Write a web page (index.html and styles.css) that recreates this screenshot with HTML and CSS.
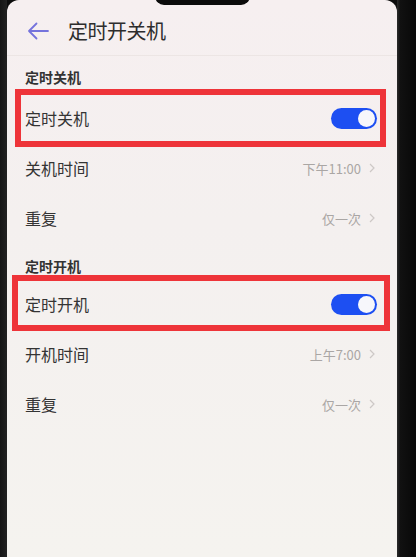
FILE: index.html
```html
<!DOCTYPE html>
<html lang="zh-CN">
<head>
<meta charset="utf-8">
<title>定时开关机</title>
<link rel="stylesheet" href="styles.css">
</head>
<body>
<div class="device">
  <div class="bezel-left"></div>
  <div class="screen">
    <div class="notch"></div>
    <header class="header">
      <svg class="back" width="22" height="18" viewBox="0 0 22 18">
        <path d="M21 9H2M9.5 1.5L2 9l7.5 7.5" fill="none" stroke="#7573dc" stroke-width="1.8" stroke-linecap="round" stroke-linejoin="round"/>
      </svg>
      <span class="title">定时开关机</span>
    </header>

    <div class="section first">定时关机</div>
    <div class="row boxed box-a">
      <span class="label">定时关机</span>
      <span class="switch"><span class="knob"></span></span>
    </div>
    <div class="row">
      <span class="label">关机时间</span>
      <span class="value">下午11:00<svg class="chev" width="6" height="10" viewBox="0 0 6 10"><path d="M1 1l4 4-4 4" fill="none" stroke="#cdc8c6" stroke-width="1.2"/></svg></span>
    </div>
    <div class="row">
      <span class="label">重复</span>
      <span class="value">仅一次<svg class="chev" width="6" height="10" viewBox="0 0 6 10"><path d="M1 1l4 4-4 4" fill="none" stroke="#cdc8c6" stroke-width="1.2"/></svg></span>
    </div>

    <div class="section second">定时开机</div>
    <div class="row boxed box-b">
      <span class="label">定时开机</span>
      <span class="switch"><span class="knob"></span></span>
    </div>
    <div class="row">
      <span class="label">开机时间</span>
      <span class="value">上午7:00<svg class="chev" width="6" height="10" viewBox="0 0 6 10"><path d="M1 1l4 4-4 4" fill="none" stroke="#cdc8c6" stroke-width="1.2"/></svg></span>
    </div>
    <div class="row">
      <span class="label">重复</span>
      <span class="value">仅一次<svg class="chev" width="6" height="10" viewBox="0 0 6 10"><path d="M1 1l4 4-4 4" fill="none" stroke="#cdc8c6" stroke-width="1.2"/></svg></span>
    </div>
  </div>
  <div class="bezel-right"></div>
</div>
</body>
</html>
```

FILE: styles.css
```css
* { box-sizing: border-box; }
html, body {
  margin: 0;
  padding: 0;
  background: #0c0c0c;
}
body {
  font-family: "Noto Sans CJK SC", "Noto Sans", sans-serif;
  color: #333;
}
.device {
  display: flex;
  width: 416px;
  height: 557px;
  overflow: hidden;
}
.bezel-left {
  width: 7px;
  flex: none;
  background: linear-gradient(to right, #151515, #222);
}
.bezel-right {
  flex: 1;
  background: linear-gradient(to right, #2b2b2b 0, #111 3px, #080808 100%);
}
.screen {
  position: relative;
  width: 390px;
  flex: none;
  height: 557px;
  background: linear-gradient(to bottom, #f6eff0 0%, #f4f0ef 40%, #f5f3ef 100%);
  border-radius: 12px 12px 0 0;
}
.notch {
  position: absolute;
  left: 148px;
  top: -10px;
  width: 95px;
  height: 15px;
  background: #0b0b0b;
  border-radius: 0 0 9px 9px;
}
.header {
  height: 56px;
  display: flex;
  align-items: center;
  padding: 6px 0 0 20px;
  border-bottom: 1px solid #ece5e4;
}
.back {
  display: block;
  margin-right: 19px;
}
.title {
  font-size: 20px;
  line-height: 24px;
  color: #2d2d2d;
  letter-spacing: -0.5px;
}
.section {
  padding-left: 18px;
  font-size: 14px;
  line-height: 20px;
  font-weight: 700;
  color: #333;
}
.section.first {
  padding-top: 11px;
  padding-bottom: 6px;
}
.section.second {
  padding-top: 13px;
  padding-bottom: 3px;
}
.row {
  position: relative;
  height: 50px;
  display: flex;
  align-items: center;
  justify-content: space-between;
  padding: 0 20px 0 18px;
}
.label {
  font-size: 16px;
  color: #343434;
}
.value {
  display: flex;
  align-items: center;
  font-size: 13px;
  color: #aaa6a4;
}
.chev {
  display: block;
  margin-left: 8px;
  margin-right: 2px;
}
.switch {
  width: 46px;
  height: 21px;
  border-radius: 11px;
  background: #1d4ff2;
  display: flex;
  align-items: center;
  justify-content: flex-end;
  padding-right: 2px;
}
.knob {
  width: 17px;
  height: 17px;
  border-radius: 50%;
  background: #f7f7fb;
}
.boxed::after {
  content: "";
  position: absolute;
  border: 6px solid #ee3439;
  pointer-events: none;
}
.box-a::after {
  top: -4px;
  bottom: -4px;
  left: 8px;
  right: 11px;
}
.box-b::after {
  top: -4px;
  bottom: -2px;
  left: 5px;
  right: 7px;
}
```
